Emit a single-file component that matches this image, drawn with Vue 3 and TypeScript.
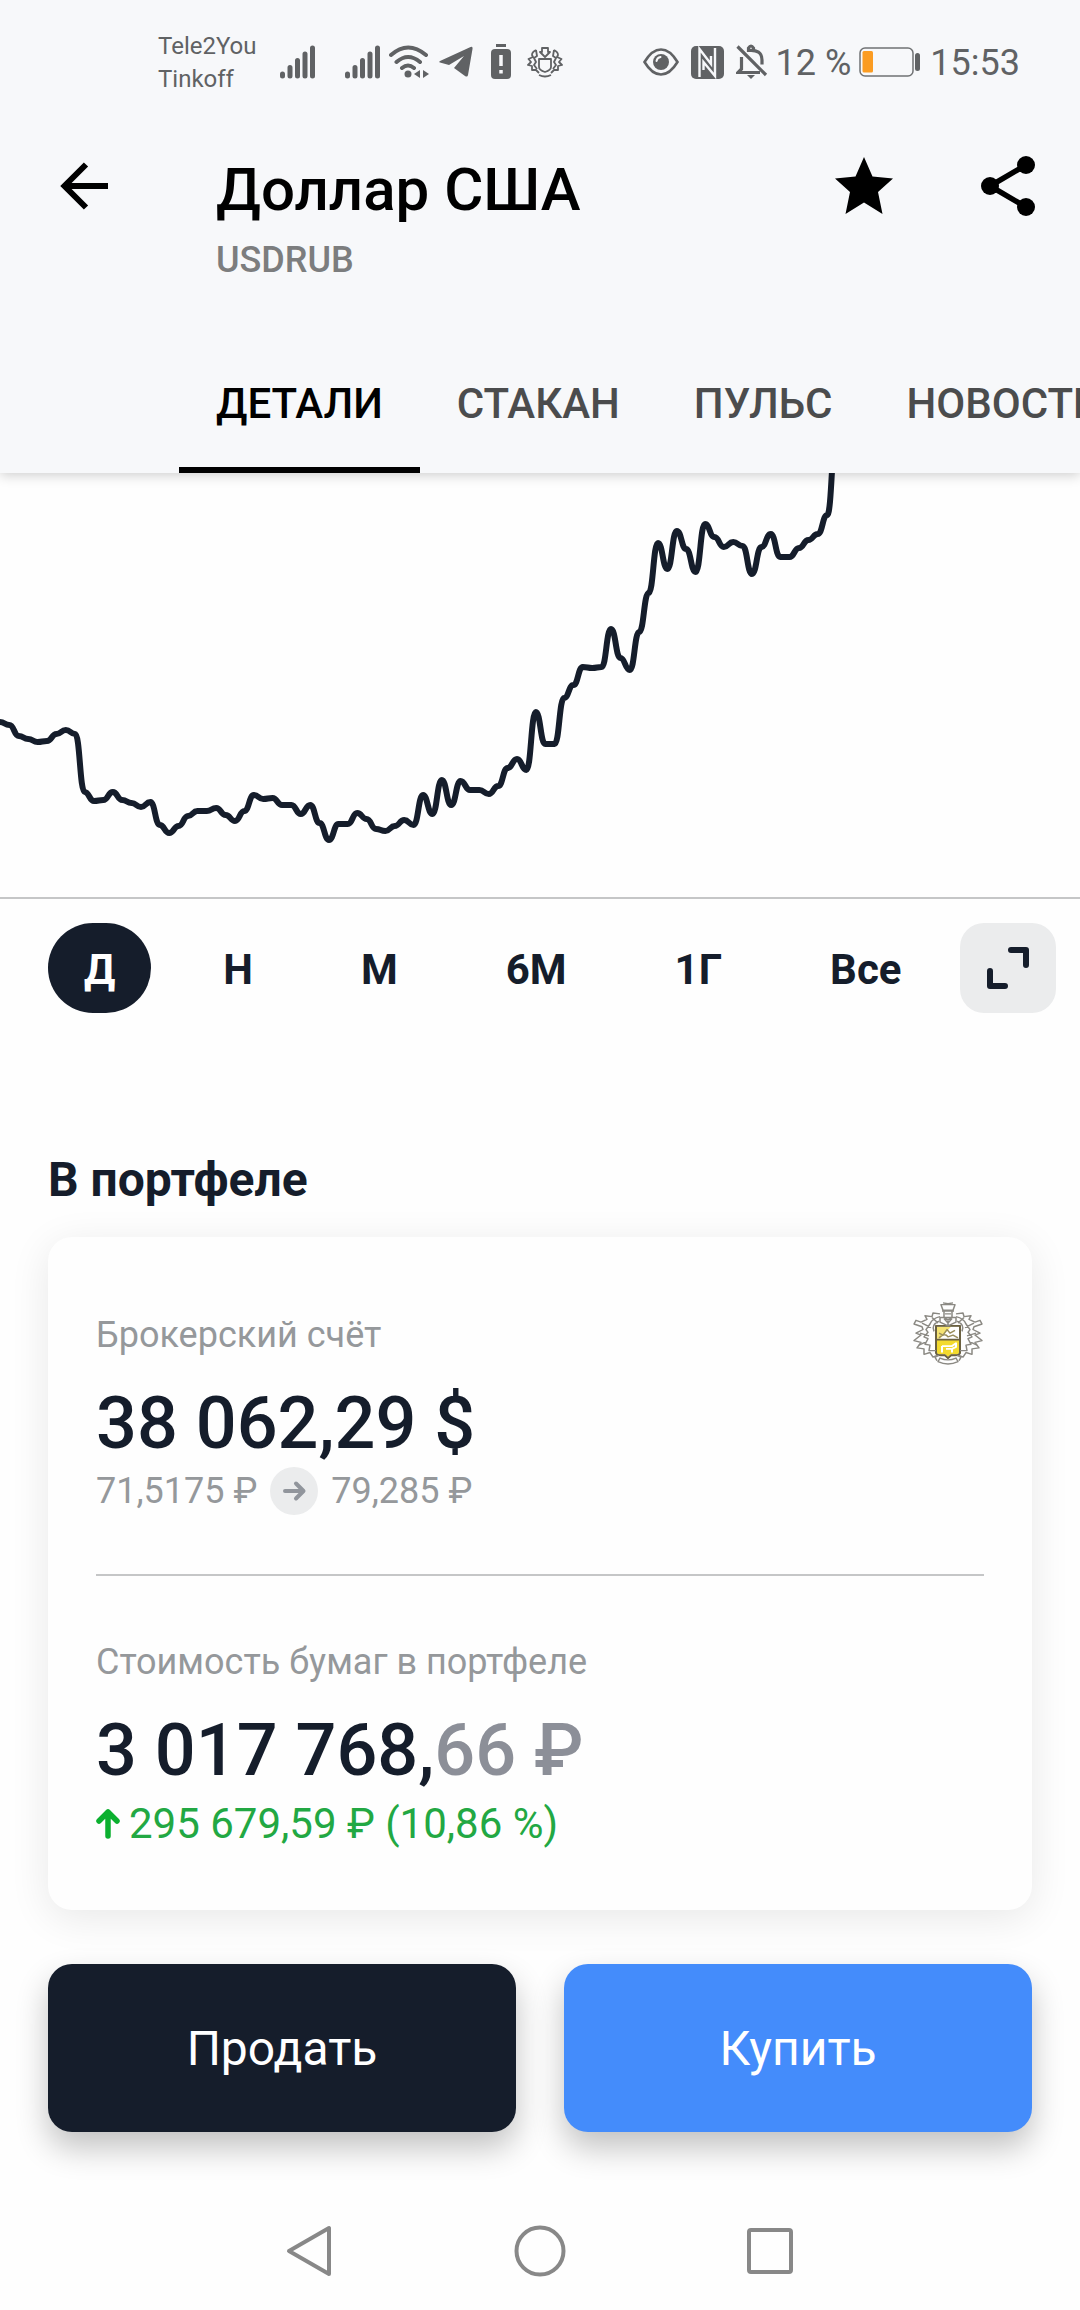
<script setup lang="ts">
import { computed, ref } from 'vue'

const tabs = ['ДЕТАЛИ', 'СТАКАН', 'ПУЛЬС', 'НОВОСТИ']
const activeTab = ref('ДЕТАЛИ')

const periods = ['Д', 'Н', 'М', '6М', '1Г', 'Все']
const activePeriod = ref('Д')

const step = 9.4
const prices: number[] = [
  249, 252, 263, 266, 269, 268, 261, 257, 261, 319, 328, 327, 319, 327, 330, 334, 329, 352, 360, 353,
  343, 338, 338, 335, 342, 348, 338, 322, 326, 325, 332, 332, 341, 332, 350, 367, 351, 351, 340, 346,
  356, 358, 353, 347, 352, 322, 341, 307, 332, 308, 317, 317, 321, 313, 295, 286, 297, 239, 271, 271,
  225, 212, 194, 195, 194, 156, 185, 197, 159, 120, 70, 96, 58, 76, 99, 51, 64, 74, 69, 73, 101, 74,
  61, 84, 84, 75, 67, 61, 42, -43,
]

const linePath = computed(() =>
  prices
    .map((y, i) => {
      const x = i * step
      if (i === 0) return `M${x} ${y}`
      const mid = x - step / 2
      return `C${mid} ${prices[i - 1]} ${mid} ${y} ${x} ${y}`
    })
    .join(' '),
)
</script>

<template>
  <div class="page">
    <header class="header">
      <div class="status">
        <div class="carriers"><span>Tele2You</span><span>Tinkoff</span></div>
        <svg v-for="n in 2" :key="n" class="signal" width="35" height="34" viewBox="0 0 35 34" fill="none" stroke="#606264" stroke-width="5" stroke-linecap="round">
          <path d="M2.5 29v2M10 22.500v8.500M17.500 15.500v15.500M25 9v22M32.500 3v28" />
        </svg>
        <svg class="wifi" width="40" height="34" viewBox="0 0 40 34" fill="none" stroke="#606264" stroke-width="4" stroke-linecap="round">
          <path d="M2 10Q19 -5 37 10M7.500 17Q19 7 31 17M13 23Q19 18 25 23" />
          <circle cx="19" cy="29" r="3.500" fill="#606264" stroke="none" />
          <path d="M31 25v8l-6-4zM34 25v8l6-4z" fill="#606264" stroke="none" />
        </svg>
        <svg class="plane" width="34" height="32" viewBox="0 0 34 32" fill="#606264">
          <path d="M1 15L31 1.200Q34 0 33.500 3L29 29Q28.500 31.500 26 30L15 22L25 10L10 19L1 16.500Q-.500 16 1 15Z" />
        </svg>
        <svg class="alert" width="20" height="36" viewBox="0 0 20 36">
          <path d="M5 1.500h10" stroke="#606264" stroke-width="3" />
          <rect y="5" width="20" height="30" rx="4" fill="#606264" />
          <path d="M10 11v11M10 26v3.500" stroke="#f7f8fa" stroke-width="3.500" />
        </svg>
        <svg class="crest-small" width="36" height="32" viewBox="0 0 36 32" fill="none" stroke="#606264" stroke-width="1.800" stroke-linejoin="round">
          <path d="M12 13h12v8q0 3-6 5q-6-2-6-5z" />
          <path d="M15 2h6v4h2l-5 5-5-5h2zM12 29q6 3 12 0" />
          <path d="M9 4Q5 6 5 9L6 11L1.500 13L4 16L1 19L5 20L5 24L9 24L12 27M9 4L10 10L7 12L9 16L7 19L10 23" />
          <path d="M27 4Q31 6 31 9L30 11L34.500 13L32 16L35 19L31 20L31 24L27 24L24 27M27 4L26 10L29 12L27 16L29 19L26 23" />
        </svg>
        <svg class="eye" width="36" height="28" viewBox="0 0 36 28">
          <path d="M1.500 14Q9 1.500 18 1.500T34.500 14Q27 26.500 18 26.500T1.500 14Z" fill="none" stroke="#606264" stroke-width="2.600" />
          <circle cx="18" cy="14" r="8" fill="#606264" />
          <path d="M13.500 13a5 5 0 0 1 4-4" fill="none" stroke="#f7f8fa" stroke-width="2" stroke-linecap="round" />
        </svg>
        <svg class="nfc" width="33" height="33" viewBox="0 0 33 33">
          <rect width="33" height="33" rx="5" fill="#606264" />
          <path d="M8.500 31V3L20 18V10M24 2v28L12.500 16v8" fill="none" stroke="#f7f8fa" stroke-width="2.400" />
        </svg>
        <svg class="bell" width="32" height="36" viewBox="0 0 32 36" fill="none" stroke="#606264" stroke-width="3.200">
          <path d="M1.500 2.500L30 31" />
          <path d="M5.500 13v12L2 28.500h22M12 6.500Q26 5 26 16v4.500M12.500 8V4q2.500-4 5 0v3" />
          <path d="M11 31h8l-4 4z" fill="#606264" stroke="none" />
        </svg>
        <span class="percent">12 %</span>
        <svg class="battery" width="61" height="30" viewBox="0 0 61 30">
          <rect x="1" y="1" width="53" height="28" rx="5" fill="none" stroke="#707274" stroke-width="1.500" />
          <rect x="3.500" y="4" width="10.500" height="21.500" rx="1.500" fill="#fb9c22" />
          <rect x="56" y="6" width="5" height="18" rx="2.500" fill="#606264" />
        </svg>
        <time>15:53</time>
      </div>

      <div class="bar">
        <button class="icon" aria-label="Назад">
          <svg width="48" height="60" viewBox="0 0 48 60" fill="none" stroke="#000" stroke-width="6">
            <path d="M48 30H4M26 8.500L4.500 30L26 51.500" />
          </svg>
        </button>
        <div class="titles">
          <h1>Доллар США</h1>
          <p>USDRUB</p>
        </div>
        <div class="actions">
          <button class="icon" aria-label="В избранное">
            <svg width="58" height="60" viewBox="0 0 58 60">
              <path d="M29 1L37.500 20.500L58 22.500L43 36L47.500 58L29 46.500L10.500 58L15 36L0 22.500L20.500 20.500Z" />
            </svg>
          </button>
          <button class="icon" aria-label="Поделиться">
            <svg width="54" height="60" viewBox="0 0 54 60">
              <path d="M45 9L9 30L45 51" fill="none" stroke="#000" stroke-width="5.500" />
              <circle cx="45" cy="9" r="9" /><circle cx="9" cy="30" r="9" /><circle cx="45" cy="51" r="9" />
            </svg>
          </button>
        </div>
      </div>

      <nav class="tabs">
        <button v-for="tab in tabs" :key="tab" :class="{ active: tab === activeTab }" @click="activeTab = tab">{{ tab }}</button>
      </nav>
    </header>

    <main>
      <svg class="chart" viewBox="0 0 1080 424" role="img" aria-label="График цены">
        <path :d="linePath" fill="none" stroke="#151d2b" stroke-width="6" stroke-linejoin="round" />
      </svg>

      <div class="periods">
        <button v-for="p in periods" :key="p" class="period" :class="{ active: p === activePeriod }" @click="activePeriod = p">{{ p }}</button>
        <button class="expand" aria-label="Развернуть график">
          <svg width="42" height="42" viewBox="0 0 42 42" fill="none" stroke="#151d2b" stroke-width="6" stroke-linecap="round" stroke-linejoin="round">
            <path d="M24 3h15v15M3 24v15h15" />
          </svg>
        </button>
      </div>

      <h2>В портфеле</h2>

      <section class="card">
        <div class="account">
          <div>
            <p class="label">Брокерский счёт</p>
            <p class="amount">38 062,29 $</p>
            <p class="rates">
              <span>71,5175 ₽</span>
              <svg width="48" height="48" viewBox="0 0 48 48">
                <circle cx="24" cy="24" r="24" fill="#ebeced" />
                <path d="M15 24h18M26 16.500L33.500 24L26 31.500" fill="none" stroke="#91959c" stroke-width="4" stroke-linecap="round" stroke-linejoin="round" />
              </svg>
              <span>79,285 ₽</span>
            </p>
          </div>
          <svg class="crest" width="72" height="72" viewBox="0 0 72 72" fill="none" stroke="#8b8983" stroke-width="1.500" stroke-linejoin="round">
            <g transform="translate(0 4) scale(1 0.92)">
              <path d="M24 27h24v29q0 3-5 3h-4l-3 3-3-3h-4q-5 0-5-3z" fill="#fff" />
              <path d="M25 42h22v14q0 2-4 2h-4l-3 3-3-3h-4q-4 0-4-2z" fill="#f3da2e" stroke="none" />
              <path d="M25 28h14L28 41h-3z" fill="#f5e372" stroke="none" />
              <path d="M24 27h24v29q0 3-5 3h-4l-3 3-3-3h-4q-5 0-5-3zM24 42h24" stroke="#6b6141" stroke-width="2" />
              <path d="M27 35l4 2 4-6 3 4 5-3M27 40q6-6 9-1l5-2 5 3" stroke="#9a8e5c" />
              <path d="M30 49h10l4-3v4l-4 2v4M30 49v7M34 52h5" stroke="#fff" stroke-width="2" />
              <path d="M29 4h14l-2 6H31zM32 11v7q4 4 8 0v-7M30 11h12M28 18h16v5l-8 4-8-4zM33 14h6M36 21v6M32 19l4 5 4-5M31 2l5 1 5-1" />
              <path d="M28 62q8 4 16 0l2 4q-10 5-20 0zM25 65l-2-4 4-2M47 65l2-4-4-2" />
              <path d="M28 14L21 13L20 17L13 16L15 20L9 23L4 21L2 25L10 28L11 31L4 35L9 37L2 43L9 45L5 51L12 52L12 58L18 56L21 61L25 59" />
              <path d="M28 17Q20 19 18 25L14 31L16 34L12 39L16 41L13 47L18 48L17 54L24 54M27 22Q19 26 22 33M20 18L26 24M10 24L19 29M8 35L17 38M7 48L15 44" />
              <path d="M44 14L51 13L52 17L59 16L57 20L63 23L68 21L70 25L62 28L61 31L68 35L63 37L70 43L63 45L67 51L60 52L60 58L54 56L51 61L47 59" />
              <path d="M44 17Q52 19 54 25L58 31L56 34L60 39L56 41L59 47L54 48L55 54L48 54M45 22Q53 26 50 33M52 18L46 24M62 24L53 29M64 35L55 38M65 48L57 44" />
            </g>
          </svg>
        </div>
        <div class="worth">
          <p class="label">Стоимость бумаг в портфеле</p>
          <p class="amount">3 017 768,<span>66 ₽</span></p>
          <p class="gain">
            <svg width="24" height="32" viewBox="0 0 24 32" fill="none" stroke="#0cb030" stroke-width="5.500" stroke-linecap="round" stroke-linejoin="round">
              <path d="M12 28V4M3 13L12 4L21 13" />
            </svg>
            <span>295 679,59 ₽ (10,86 %)</span>
          </p>
        </div>
      </section>

      <div class="trade">
        <button class="sell">Продать</button>
        <button class="buy">Купить</button>
      </div>
    </main>

    <footer class="system">
      <button class="icon" aria-label="Системная кнопка назад">
        <svg width="52" height="52" viewBox="0 0 52 52"><path d="M45 3v46L5 26Z" /></svg>
      </button>
      <button class="icon" aria-label="Домой">
        <svg width="52" height="52" viewBox="0 0 52 52"><circle cx="26" cy="26" r="23.500" /></svg>
      </button>
      <button class="icon" aria-label="Недавние">
        <svg width="52" height="52" viewBox="0 0 52 52"><rect x="5" y="5" width="42" height="42" rx="2" /></svg>
      </button>
    </footer>
  </div>
</template>

<style>
body {
  margin: 0;
  background: #fefefe;
}
</style>

<style scoped>
.page {
  font-family: Roboto, 'Noto Sans', sans-serif;
  color: #151d2b;
  overflow: hidden;
}
h1, h2, p {
  margin: 0;
}
button {
  border: 0;
  padding: 0;
  background: none;
  font-family: inherit;
  color: inherit;
  cursor: pointer;
}
svg {
  display: block;
  flex: none;
}
.header {
  position: relative;
  background: #f7f8fa;
  box-shadow: 0 2px 12px rgba(0, 0, 0, 0.2);
}
.status {
  display: flex;
  align-items: center;
  height: 124px;
  padding: 0 60px 0 158px;
  color: #606264;
  font-size: 36px;
}
.carriers {
  display: flex;
  flex-direction: column;
  width: 122px;
  margin-top: 2px;
  font-size: 24px;
  line-height: 33px;
}
.signal {
  margin-right: 30px;
}
.signal + .wifi {
  margin-left: -21px;
}
.plane {
  margin-left: 10px;
}
.alert {
  margin-left: 18px;
}
.crest-small {
  margin-left: 16px;
}
.eye {
  margin-left: auto;
}
.nfc, .bell {
  margin-left: 12px;
}
.percent {
  margin: 2px 8px 0;
  white-space: nowrap;
}
.battery {
  margin-right: 10px;
}
time {
  margin-top: 2px;
}
.bar {
  display: flex;
  align-items: flex-start;
  padding: 30px 45px 0 60px;
}
.icon {
  margin-top: 2px;
}
.titles {
  flex: 1;
  margin-left: 108px;
}
h1 {
  color: #000;
  font-size: 60px;
  font-weight: 500;
  line-height: 72px;
}
.titles p {
  margin-top: 10px;
  color: #7c7d7e;
  font-size: 36px;
  font-weight: 500;
  line-height: 48px;
}
.actions {
  display: flex;
  gap: 88px;
}
.tabs {
  display: flex;
  margin-top: 49px;
  padding-left: 179px;
  overflow-x: auto;
  scrollbar-width: none;
}
.tabs button {
  flex: none;
  box-sizing: border-box;
  height: 140px;
  padding: 0 37px;
  border: solid transparent;
  border-width: 6px 0;
  color: #4b4c4d;
  font-size: 42px;
  font-weight: 500;
}
.tabs .active {
  border-bottom-color: #000;
  color: #000;
}
.chart {
  width: 100%;
  border-bottom: 2px solid #c5c6c7;
}
.periods {
  display: flex;
  gap: 36px;
  padding: 24px 24px 0 48px;
}
.period {
  height: 90px;
  padding: 2px 36px 0;
  border-radius: 45px;
  font-size: 42px;
  font-weight: 700;
}
.period.active {
  background: #151d2b;
  color: #fff;
}
.period:nth-last-child(2) {
  margin-right: -36px;
}
.expand {
  display: grid;
  place-items: center;
  width: 96px;
  height: 90px;
  margin-left: auto;
  border-radius: 24px;
  background: #ebeced;
}
h2 {
  margin: 139px 48px 29px;
  font-size: 48px;
  font-weight: 700;
  line-height: 56px;
}
.card {
  margin: 0 48px;
  padding: 60px 48px 62px;
  border-radius: 24px;
  background: #fefefe;
  box-shadow: 0 8px 40px rgba(0, 0, 0, 0.09);
}
.account {
  display: flex;
  justify-content: space-between;
  align-items: flex-start;
  padding-bottom: 58px;
  border-bottom: 2px solid #c5c6c7;
}
.label {
  margin-top: 14px;
  color: #95989b;
  font-size: 36px;
  line-height: 48px;
}
.amount {
  margin-top: 23px;
  font-size: 72px;
  font-weight: 500;
  line-height: 84px;
}
.amount span {
  color: #8c8f98;
}
.rates {
  display: flex;
  align-items: center;
  gap: 13px;
  color: #95989b;
  font-size: 36px;
  line-height: 50px;
}
.worth {
  padding-top: 48px;
}
.gain {
  display: flex;
  align-items: center;
  gap: 9px;
  margin-top: 7px;
  color: #22a843;
  font-size: 42px;
  line-height: 48px;
}
.trade {
  display: grid;
  grid-template-columns: 1fr 1fr;
  gap: 48px;
  padding: 54px 48px 0;
}
.trade button {
  height: 168px;
  border-radius: 24px;
  box-shadow: 0 16px 32px rgba(0, 0, 0, 0.24);
  color: #fff;
  font-size: 48px;
}
.sell {
  background: #151d2b;
}
.buy {
  background: #448cfb;
}
.system {
  display: flex;
  justify-content: center;
  gap: 178px;
  padding: 91px 0 32px;
}
.system svg {
  fill: none;
  stroke: #888;
  stroke-width: 4px;
  stroke-linejoin: round;
}
</style>
